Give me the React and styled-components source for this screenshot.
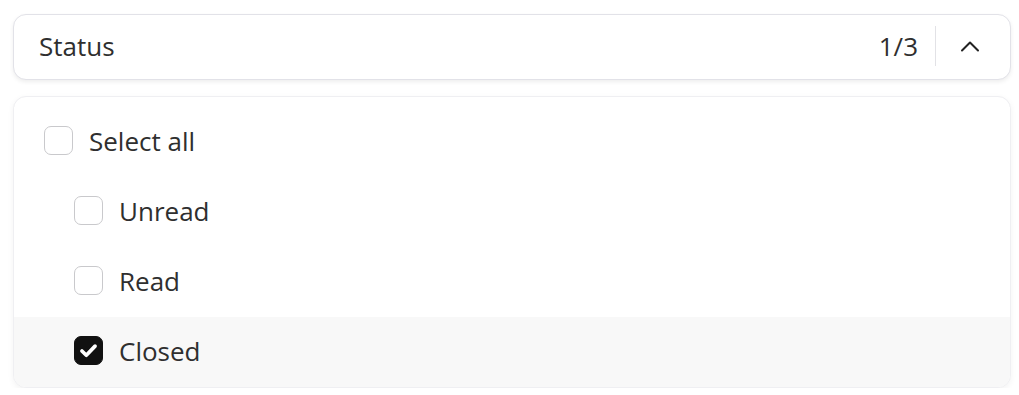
import React, { useState } from 'react'
import styled, { createGlobalStyle } from 'styled-components'

const GlobalStyle = createGlobalStyle`
  body {
    margin: 0;
    background: #ffffff;
    font-family: "Open Sans", "Noto Sans", sans-serif;
    color: #2f2f2f;
  }
`

const Wrapper = styled.div`
  padding: 14px 8px 0 13px;
  display: flex;
  flex-direction: column;
  gap: 16px;
`

const Trigger = styled.div`
  height: 66px;
  box-sizing: border-box;
  border: 1.5px solid #e2e2e8;
  border-radius: 13px;
  box-shadow: 0 2px 4px rgba(0, 0, 0, 0.07);
  display: flex;
  align-items: center;
  padding: 0 28px 2px 25px;
  background: #fff;
`

const Label = styled.span`
  flex: 1;
  font-size: 26px;
`

const Count = styled.span`
  font-size: 26px;
`

const Divider = styled.span`
  width: 1px;
  height: 40px;
  background: #e2e2e6;
  margin: 0 22px 0 17px;
`

const Menu = styled.div`
  border: 1.5px solid #efeff2;
  border-radius: 13px;
  box-shadow: 0 2px 6px rgba(0, 0, 0, 0.05);
  padding-top: 10px;
  overflow: hidden;
  background: #fff;
`

const Row = styled.label`
  height: 70px;
  display: flex;
  align-items: center;
  padding-left: ${p => (p.$nested ? 60 : 30)}px;
  padding-bottom: 3px;
  box-sizing: border-box;
  gap: 16px;
  font-size: 26px;
  background: ${p => (p.$checked ? '#f8f8f8' : '#fff')};
  cursor: pointer;
`

const Box = styled.span`
  width: 29px;
  height: 29px;
  box-sizing: border-box;
  border-radius: 7px;
  border: 1.5px solid ${p => (p.$checked ? '#111' : '#c9c9cc')};
  background: ${p => (p.$checked ? '#111' : '#fff')};
  display: flex;
  align-items: center;
  justify-content: center;
`

const Checkbox = ({ checked }) => (
  <Box $checked={checked}>
    {checked && (
      <svg width="21" height="21" viewBox="0 0 24 24" fill="none" stroke="#fff" strokeWidth="4.2" strokeLinecap="round" strokeLinejoin="round">
        <path d="M4.5 12.5l5 5L19.5 7" />
      </svg>
    )}
  </Box>
)

const options = ['Unread', 'Read', 'Closed']

export default function App() {
  const [selected, setSelected] = useState(['Closed'])
  const toggle = o =>
    setSelected(s => (s.includes(o) ? s.filter(x => x !== o) : [...s, o]))
  const all = selected.length === options.length

  return (
    <Wrapper>
      <GlobalStyle />
      <Trigger>
        <Label>Status</Label>
        <Count>{selected.length}/{options.length}</Count>
        <Divider />
        <svg width="24" height="24" viewBox="0 0 24 24" fill="none" stroke="#222" strokeWidth="2" strokeLinecap="round" strokeLinejoin="round">
          <path d="M4 16.5l8-8 8 8" />
        </svg>
      </Trigger>
      <Menu>
        <Row onClick={() => setSelected(all ? [] : options)}>
          <Checkbox checked={all} />
          Select all
        </Row>
        {options.map(o => (
          <Row key={o} $nested $checked={selected.includes(o)} onClick={() => toggle(o)}>
            <Checkbox checked={selected.includes(o)} />
            {o}
          </Row>
        ))}
      </Menu>
    </Wrapper>
  )
}
